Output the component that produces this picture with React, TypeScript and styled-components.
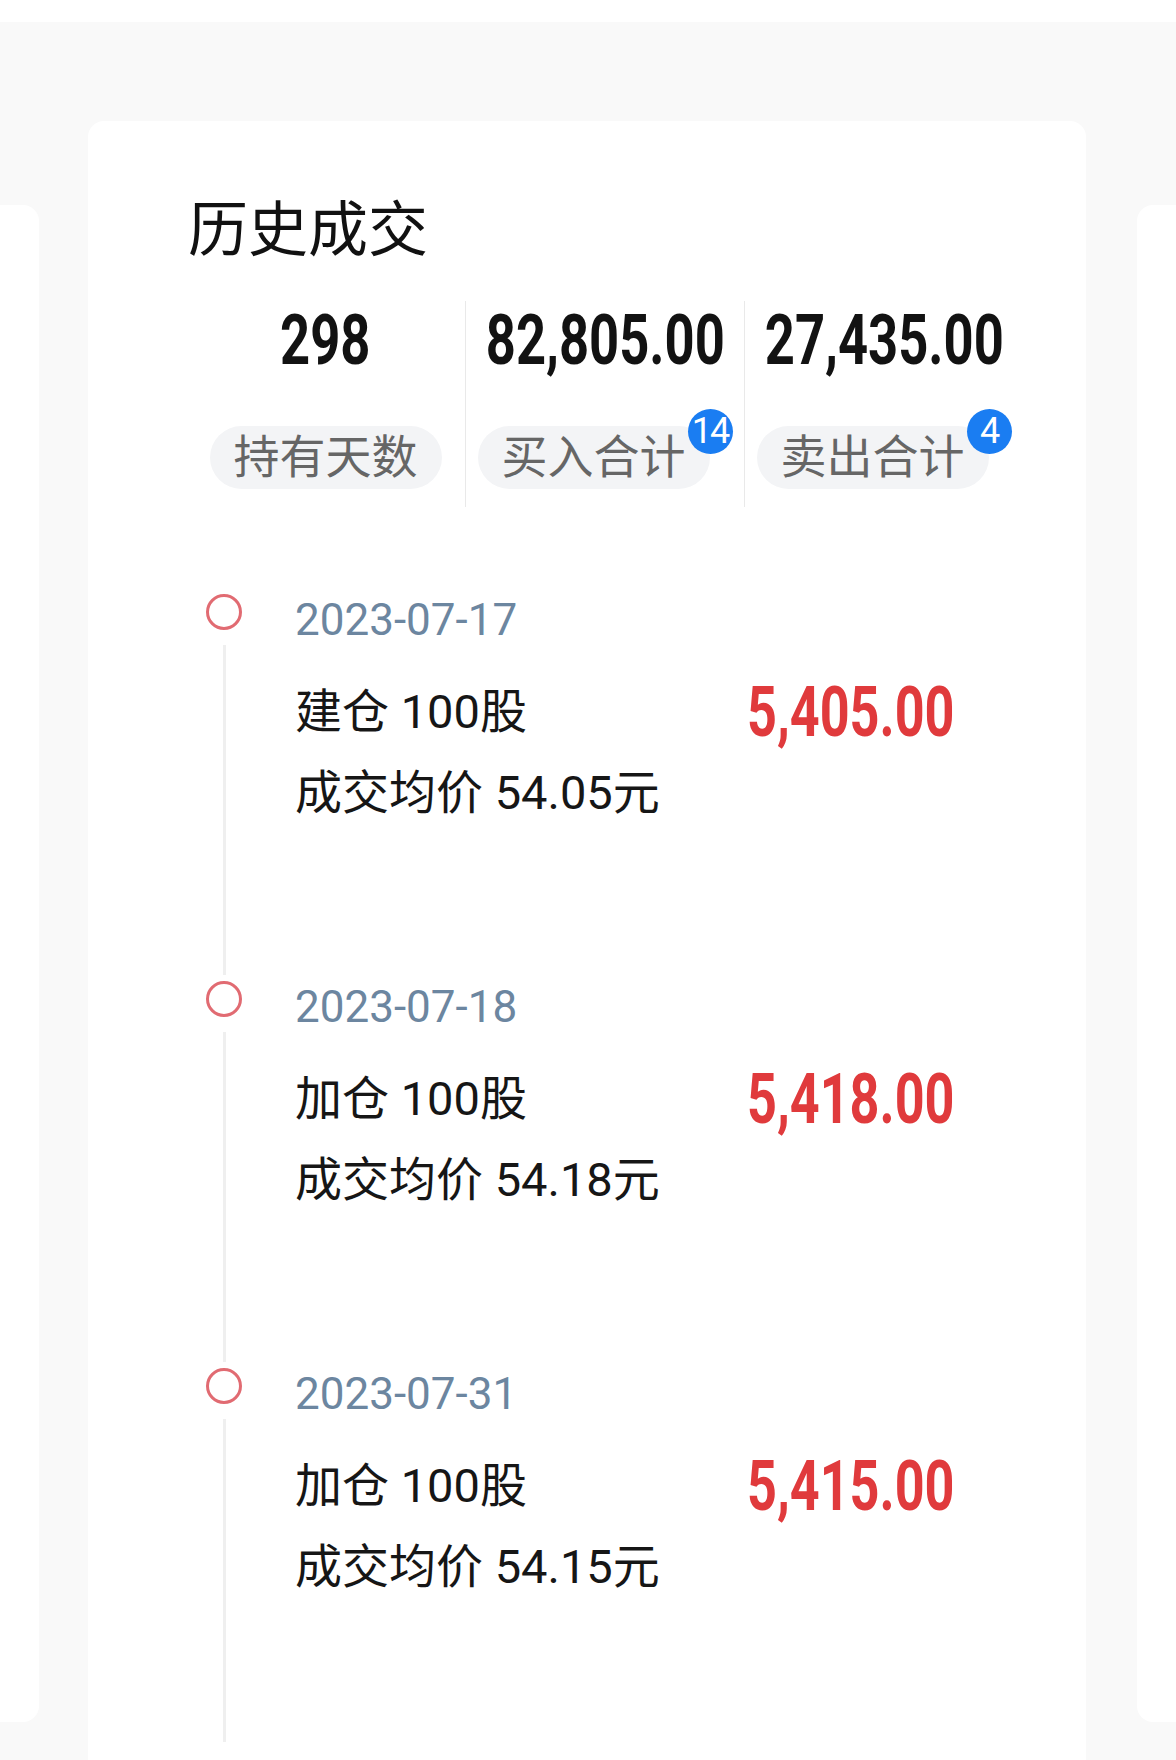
import React from 'react';
import styled, { createGlobalStyle } from 'styled-components';

const GlobalStyle = createGlobalStyle`
  html, body {
    margin: 0;
    padding: 0;
    background: #ffffff;
  }
  body {
    font-family: Roboto, "Noto Sans CJK SC", sans-serif;
    color: #141414;
  }
`;

// condensed DIN-like figures: Roboto bold squeezed horizontally
const NUM_FONT = `Roboto, "Liberation Sans", sans-serif`;

const trades = [
  { date: '2023-07-17', action: '建仓', qty: '100股', amount: '5,405.00', price: '54.05元' },
  { date: '2023-07-18', action: '加仓', qty: '100股', amount: '5,418.00', price: '54.18元' },
  { date: '2023-07-31', action: '加仓', qty: '100股', amount: '5,415.00', price: '54.15元' },
];

const stats = [
  { value: '298', label: '持有天数' },
  { value: '82,805.00', label: '买入合计', badge: '14' },
  { value: '27,435.00', label: '卖出合计', badge: '4' },
];

const App = () => {
  return (
    <Screen>
      <GlobalStyle />
      <Stage>
        <SideCard $side="left" />
        <MainCard>
          <Title>历史成交</Title>

          <Stats>
            {stats.map((s, i) => (
              <StatCol key={s.label} $first={i === 0}>
                <StatValue>{s.value}</StatValue>
                <PillRow>
                  <Pill>{s.label}</Pill>
                  {s.badge && <Badge>{s.badge}</Badge>}
                </PillRow>
              </StatCol>
            ))}
          </Stats>

          <Timeline>
            {trades.map((t, i) => (
              <Item key={t.date} $last={i === trades.length - 1}>
                <Rail>
                  <Dot />
                  <RailLine />
                </Rail>
                <Content>
                  <DateText>{t.date}</DateText>
                  <TradeRow>
                    <TradeText>{t.action} {t.qty}</TradeText>
                    <Amount>{t.amount}</Amount>
                  </TradeRow>
                  <TradeText className="sub">成交均价 {t.price}</TradeText>
                </Content>
              </Item>
            ))}
          </Timeline>
        </MainCard>
        <SideCard $side="right" />
      </Stage>
    </Screen>
  );
};

const Screen = styled.div`
  width: 1176px;
  height: 1760px;
  overflow: hidden;
  background: #ffffff;
  padding-top: 22px;
  box-sizing: border-box;
`;

const Stage = styled.div`
  height: 100%;
  background: #f9f9f9;
  display: flex;
  align-items: flex-start;
  padding-top: 99px;
  box-sizing: border-box;
`;

const SideCard = styled.div<{ $side: 'left' | 'right' }>`
  flex: 0 0 ${(p) => (p.$side === 'left' ? '39px' : '60px')};
  min-width: 0;
  margin-top: 84px;
  height: 1517px;
  background: #ffffff;
  border-radius: ${(p) => (p.$side === 'left' ? '0 16px 16px 0' : '16px 0 0 16px')};
`;

const MainCard = styled.div`
  flex: 0 0 998px;
  min-width: 0;
  margin: 0 51px 0 49px;
  height: 1639px;
  background: #ffffff;
  border-radius: 16px 16px 0 0;
  padding: 0 98px;
  box-sizing: border-box;
`;

const Title = styled.h1`
  margin: 0;
  padding: 74px 0 0 2px;
  font-size: 60px;
  line-height: 72px;
  font-weight: 400;
  color: #111111;
`;

const Stats = styled.div`
  display: grid;
  grid-template-columns: repeat(3, 279px);
  margin-top: 34px;
`;

const StatCol = styled.div<{ $first: boolean }>`
  display: flex;
  flex-direction: column;
  align-items: center;
  padding: 9px 0 18px;
  border-left: ${(p) => (p.$first ? 'none' : '1px solid #e9e9e9')};
`;

const StatValue = styled.div`
  font-family: ${NUM_FONT};
  font-weight: 700;
  font-size: 70px;
  line-height: 60px;
  color: #121212;
  white-space: nowrap;
  transform: scaleX(0.75);
`;

const PillRow = styled.div`
  display: flex;
  align-items: flex-start;
  margin-top: 56px;
`;

const Pill = styled.div`
  height: 63px;
  padding: 0 24px;
  border-radius: 32px;
  background: #f3f4f6;
  font-size: 46px;
  line-height: 63px;
  color: #666666;
`;

const Badge = styled.div`
  width: 45px;
  height: 45px;
  margin: -17px 0 0 -22px;
  border-radius: 50%;
  background: #1a7df2;
  color: #ffffff;
  font-family: ${NUM_FONT};
  font-size: 36px;
  line-height: 45px;
  text-align: center;
  letter-spacing: -2px;
`;

const Timeline = styled.div`
  margin-top: 87px;
`;

const Item = styled.div<{ $last: boolean }>`
  display: grid;
  grid-template-columns: 76px 1fr;
  height: ${(p) => (p.$last ? '380px' : '387px')};
`;

const Rail = styled.div`
  display: flex;
  flex-direction: column;
  align-items: center;
`;

const Dot = styled.div`
  width: 36px;
  height: 36px;
  box-sizing: border-box;
  border: 3px solid #e16b72;
  border-radius: 50%;
`;

const RailLine = styled.div`
  flex: 1;
  width: 3px;
  margin: 15px 0 6px;
  background: #efefef;
`;

const Content = styled.div`
  padding: 1px 34px 0 33px;
`;

const DateText = styled.div`
  font-size: 44px;
  line-height: 50px;
  color: #6c86a0;
`;

const TradeRow = styled.div`
  display: flex;
  justify-content: space-between;
  align-items: center;
  margin-top: 39px;
`;

const TradeText = styled.div`
  font-size: 47px;
  line-height: 56px;
  color: #161616;

  &.sub {
    margin-top: 25px;
  }
`;

const Amount = styled.div`
  font-family: ${NUM_FONT};
  font-weight: 700;
  font-size: 70px;
  line-height: 56px;
  color: #e03a3c;
  white-space: nowrap;
  transform: scaleX(0.745);
  transform-origin: right center;
`;

export default App;
